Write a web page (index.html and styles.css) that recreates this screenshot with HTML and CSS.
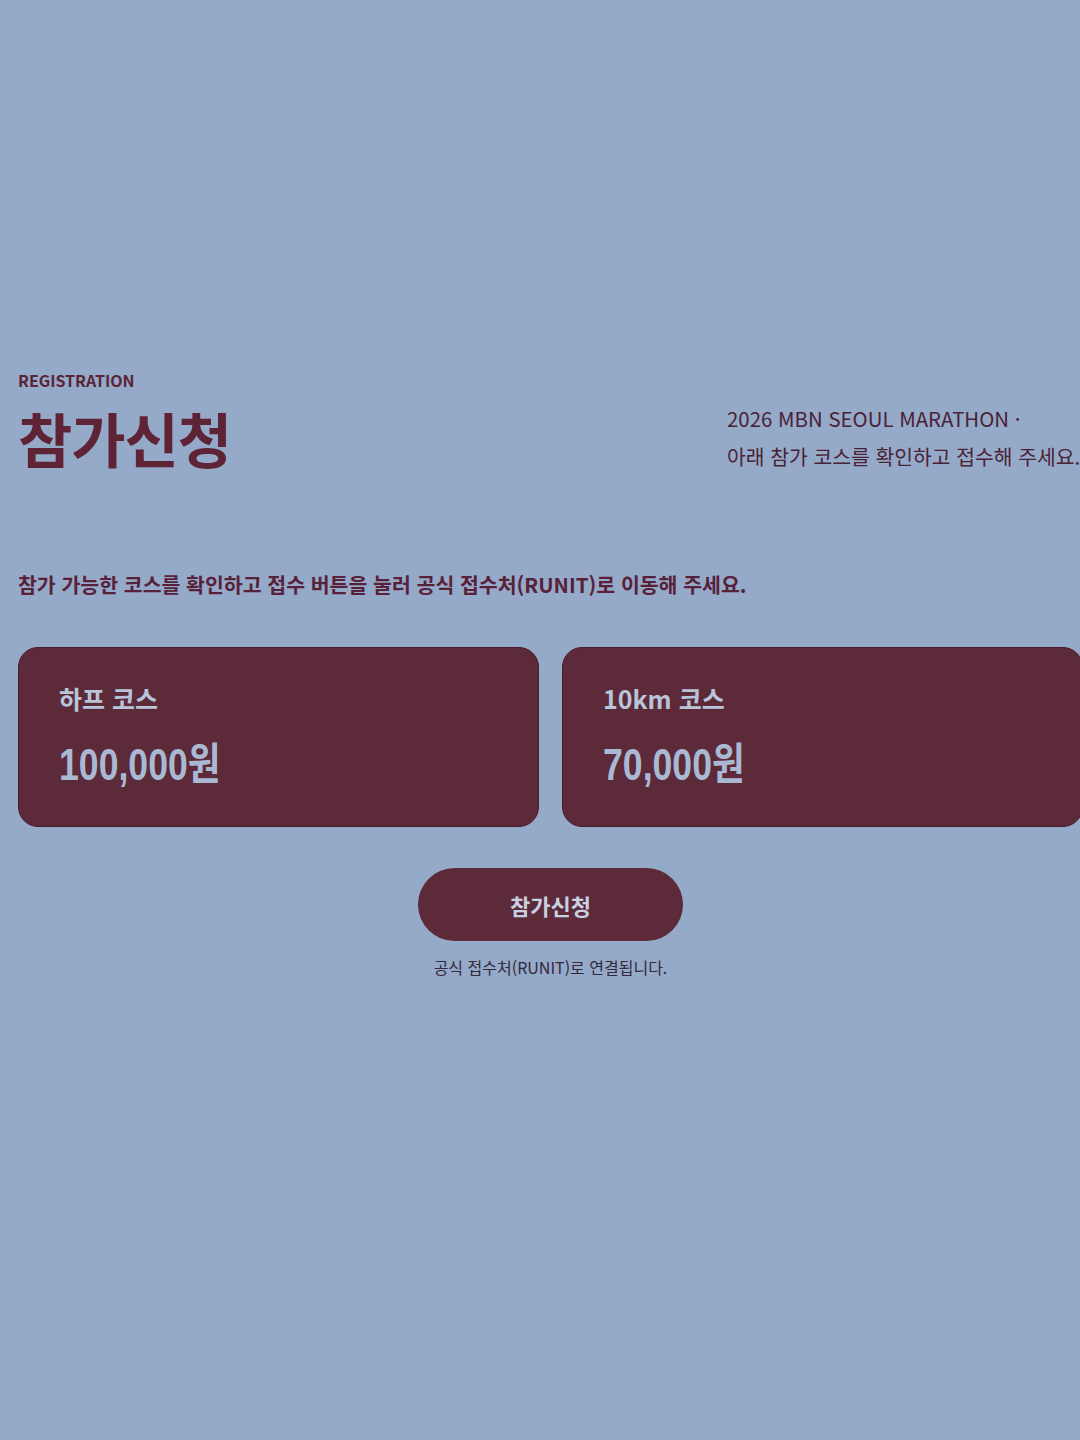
FILE: index.html
```html
<!DOCTYPE html>
<html lang="ko">

<head>
    <meta charset="UTF-8">
    <title>참가신청 - 2026 MBN SEOUL MARATHON</title>
    <link rel="stylesheet" href="styles.css">
</head>

<body>
    <main id="registration">
        <!-- 상단 제목 -->
        <div class="reg-head">
            <div class="reg-title">
                <p class="reg-label">REGISTRATION</p>
                <h1>참가신청</h1>
            </div>
            <p class="reg-desc">2026 MBN SEOUL MARATHON ·<br>아래 참가 코스를 확인하고 접수해 주세요.</p>
        </div>

        <p class="reg-guide">참가 가능한 코스를 확인하고 접수 버튼을 눌러 공식 접수처(RUNIT)로 이동해 주세요.</p>

        <!-- 코스 카드 -->
        <div class="course-list">
            <div class="course-card">
                <p class="course-name">하프 코스</p>
                <p class="course-price"><span>100,000원</span></p>
            </div>
            <div class="course-card">
                <p class="course-name">10km 코스</p>
                <p class="course-price"><span>70,000원</span></p>
            </div>
        </div>

        <div class="apply">
            <button class="apply-button">참가신청</button>
            <p class="apply-note">공식 접수처(RUNIT)로 연결됩니다.</p>
        </div>
    </main>
</body>

</html>
```

FILE: styles.css
```css
html,
body {
    margin: 0;
    overflow: hidden;
}

body {
    background-color: #95a9c8;
    color: #5c2536;
    font-family: "Noto Sans CJK KR", "Noto Sans", sans-serif;
    min-height: 1440px;
}

p,
h1 {
    margin: 0;
}

#registration {
    width: 1065px;
    margin-left: 18px;
    padding-top: 368px;
}

.reg-head {
    display: flex;
    justify-content: space-between;
    align-items: flex-start;
}

.reg-label {
    font-size: 16px;
    font-weight: bold;
    line-height: 24px;
    color: #5a2438;
}

.reg-title h1 {
    margin-top: 13px;
    font-size: 59px;
    font-weight: bold;
    line-height: 66px;
    letter-spacing: -1px;
    color: #5e2436;
}

.reg-desc {
    width: 356px;
    white-space: nowrap;
    font-size: 20.4px;
    line-height: 38px;
    color: #4a2236;
    padding-top: 31px;
}

.reg-guide {
    margin-top: 93px;
    font-size: 20.5px;
    font-weight: bold;
    line-height: 32px;
    color: #58213a;
}

.course-list {
    display: grid;
    grid-template-columns: 1fr 1fr;
    gap: 23px;
    margin-top: 47px;
}

.course-card {
    background: #5c2a38;
    border: 1px solid #4a1f2c;
    border-radius: 20px;
    height: 180px;
    padding: 32px 40px 0;
    box-sizing: border-box;
}

.course-name {
    font-size: 25px;
    font-weight: bold;
    line-height: 36px;
    color: #b9c4da;
}

.course-price {
    margin-top: 23px;
    font-family: "Liberation Sans", "Noto Sans CJK KR", sans-serif;
    font-size: 44px;
    font-weight: bold;
    line-height: 52px;
    color: #a9b9d4;
}

.course-price span {
    display: inline-block;
    transform: scaleX(0.81);
    transform-origin: left center;
}

.apply {
    display: flex;
    flex-direction: column;
    align-items: center;
    margin-top: 41px;
}

.apply-button {
    width: 265px;
    height: 73px;
    border: none;
    border-radius: 40px;
    background: #5c2a38;
    color: #c8d0e2;
    font-family: "Noto Sans CJK KR", sans-serif;
    font-size: 22px;
    font-weight: bold;
    cursor: pointer;
}

.apply-note {
    margin-top: 14px;
    font-size: 16px;
    line-height: 24px;
    color: #34283a;
}
```
